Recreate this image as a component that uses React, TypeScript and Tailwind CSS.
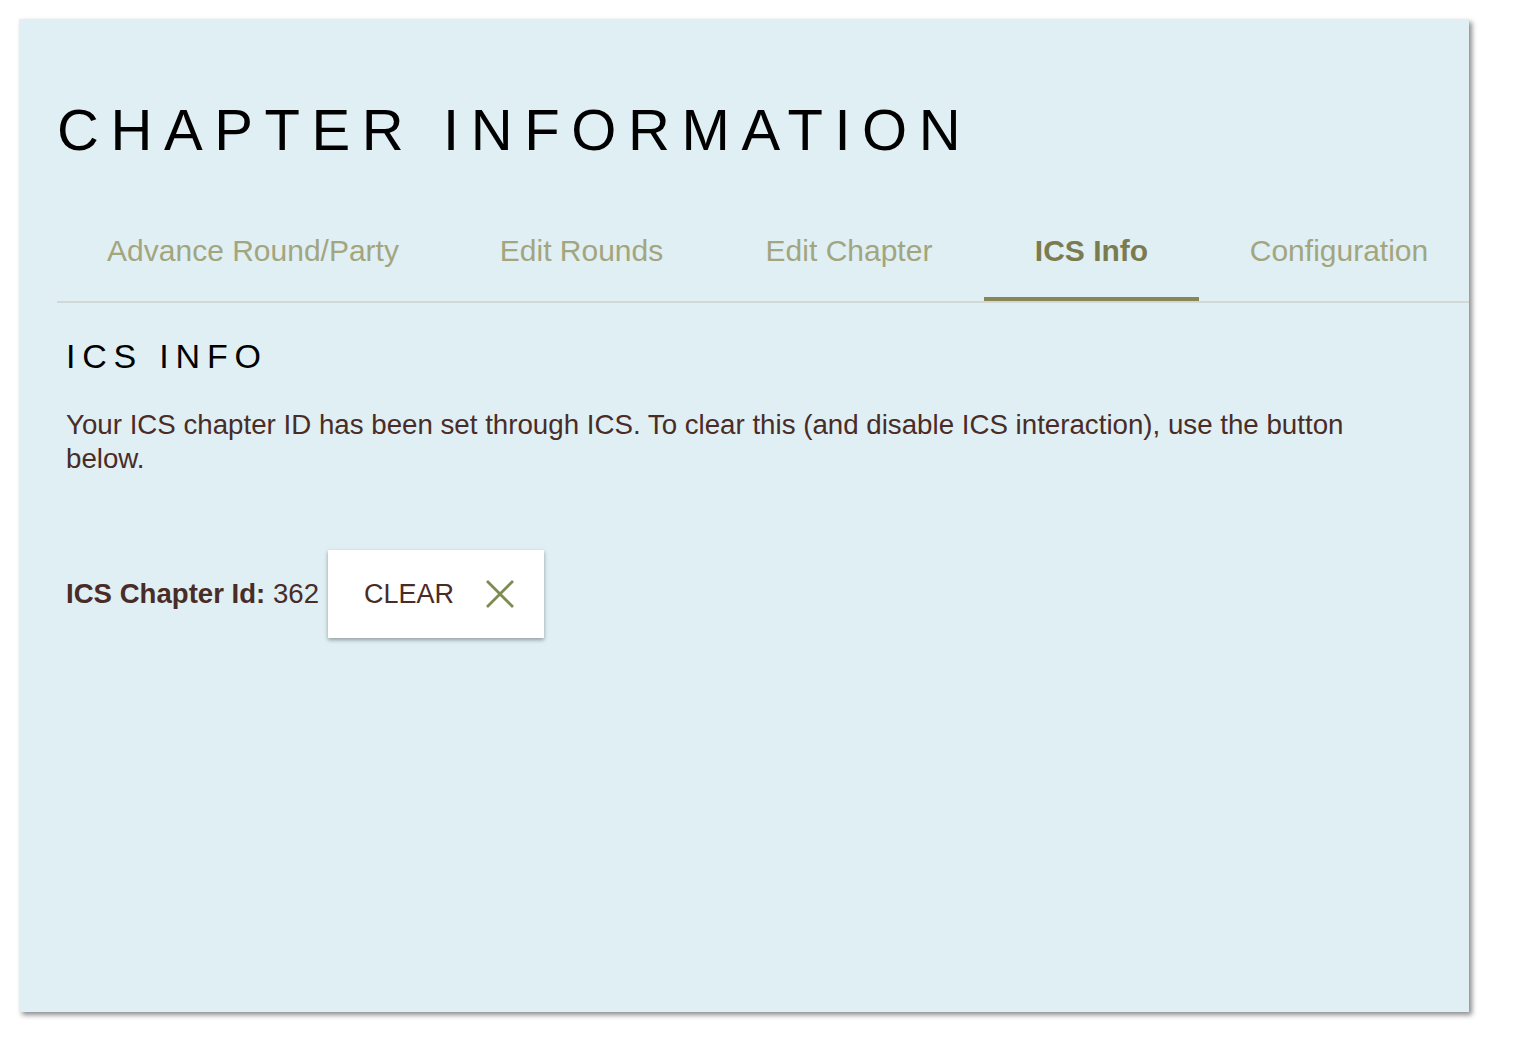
import React from 'react';

const tabs = [
  { label: 'Advance Round/Party', width: 'w-[392px]' },
  { label: 'Edit Rounds', width: 'w-[265px]' },
  { label: 'Edit Chapter', width: 'w-[270px]' },
  { label: 'ICS Info', width: 'w-[215px]' },
  { label: 'Configuration', width: 'w-[280px]' },
];

const ClearIcon = () => (
  <svg width="30" height="30" viewBox="0 0 30 30" fill="none" stroke="#7d8a50" strokeWidth="2.8">
    <path d="M2 2 L28 28 M28 2 L2 28" />
  </svg>
);

const App: React.FC = () => {
  const active = 'ICS Info';

  return (
    <div className="min-h-[1044px] w-[1514px] bg-white pt-[19px] pl-[19px] font-['Liberation_Sans',Arial,sans-serif]">
      <div className="w-[1450px] h-[993px] bg-[#dfeff4] shadow-[3px_3px_5px_rgba(0,0,0,0.45)]">
        <h1 className="pl-[38px] pt-[73px] text-[58px] leading-[76px] tracking-[0.2em] text-black">
          CHAPTER INFORMATION
        </h1>

        <div className="ml-[38px] mt-[58px] flex border-b-2 border-[#d2d8d7]">
          {tabs.map((t) => (
            <div key={t.label} className={'flex shrink-0 flex-col items-center ' + t.width}>
              <span
                className={
                  'pt-[7px] pb-[28px] text-[30px] leading-[36px] ' +
                  (t.label === active ? 'font-bold text-[#7b7b4f]' : 'text-[#a3a57e]')
                }
              >
                {t.label}
              </span>
              <div className={'h-[4px] w-full ' + (t.label === active ? 'bg-[#868657]' : 'bg-transparent')} />
            </div>
          ))}
        </div>

        <div className="pl-[47px] pr-[90px]">
          <h2 className="mt-[33px] text-[34px] leading-[40px] tracking-[0.2em] text-black">ICS INFO</h2>
          <p className="mt-[32px] text-[27.7px] leading-[34px] text-[#4a2c27]">
            Your ICS chapter ID has been set through ICS. To clear this (and disable ICS interaction), use the button
            below.
          </p>

          <div className="mt-[74px] flex items-center text-[27.6px] text-[#4a2c27]">
            <span>
              <b>ICS Chapter Id:</b> 362
            </span>
            <button className="ml-[9px] flex h-[88px] w-[216px] items-center bg-white pl-[36px] shadow-[0_2px_4px_rgba(0,0,0,0.35)]">
              <span className="text-[27px] text-[#4a2c27]">CLEAR</span>
              <span className="ml-[31px]">
                <ClearIcon />
              </span>
            </button>
          </div>
        </div>
      </div>
    </div>
  );
};

export default App;
